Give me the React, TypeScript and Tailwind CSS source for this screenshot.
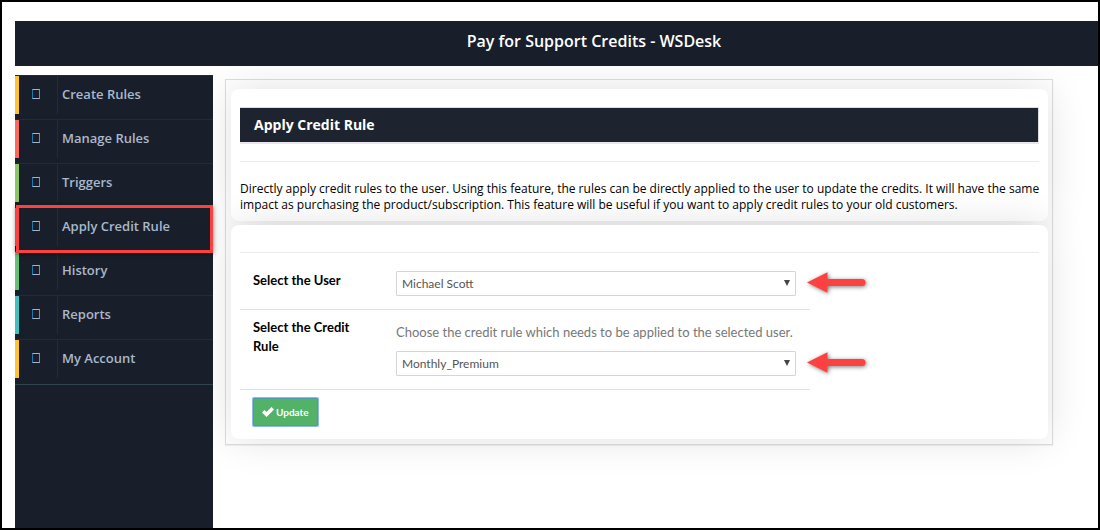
import { useState } from "react";
import type { ReactNode } from "react";
import clsx from "clsx";

interface MenuItem {
    label: string;
    bar: string;
}

const menuItems: MenuItem[] = [
    { label: "Create Rules", bar: "border-[#ffc233]" },
    { label: "Manage Rules", bar: "border-[#fa6a5d]" },
    { label: "Triggers", bar: "border-[#8cc665]" },
    { label: "Apply Credit Rule", bar: "border-[#fa6a5d]" },
    { label: "History", bar: "border-[#64c278]" },
    { label: "Reports", bar: "border-[#45c0c0]" },
    { label: "My Account", bar: "border-[#ffc233]" },
];

const ACTIVE = "Apply Credit Rule";

function Sidebar() {
    return (
        <nav className="relative z-10 w-[198px] shrink-0 bg-[#191f2a]">
            <ul className="border-b border-[#30444f] pb-px">
                {menuItems.map((item) => (
                    <li key={item.label} className="relative h-11 border-t border-[#242b36]">
                        <a href="#" className={clsx("flex h-[38px] items-center border-l-4", item.bar)}>
                            <span className="flex h-full w-[39px] items-center border-r border-[#242b36] pb-[2px] pl-[13px]">
                                <span className="h-[10px] w-2 border border-[#9db4cc] border-l-[#1c77ad] border-r-[#4d9bc8]" />
                            </span>
                            <span className="pl-1 text-[13px] font-semibold text-[#a9b8cc]">{item.label}</span>
                        </a>
                        {item.label === ACTIVE && (
                            <div className="pointer-events-none absolute -top-[3px] right-0 left-px z-10 h-12 border-3 border-[#fd4040] shadow-[0_1px_5px_rgba(0,0,0,0.5)]" />
                        )}
                    </li>
                ))}
            </ul>
        </nav>
    );
}

function PointerArrow() {
    return (
        <svg
            className="pointer-events-none absolute top-1/2 left-full ml-2 -translate-y-1/2 overflow-visible drop-shadow-[1px_1px_2px_rgba(0,0,0,0.5)]"
            width="64"
            height="26"
            viewBox="0 0 64 26"
            fill="#fd4040"
            aria-hidden="true"
        >
            <path d="M3 11.5 23.500 1.200V8H58a3.500 3.500 0 0 1 0 7H23.500V21.800Z" />
        </svg>
    );
}

interface SelectFieldProps {
    id: string;
    value: string;
    options: string[];
    onChange: (value: string) => void;
}

function SelectField({ id, value, options, onChange }: SelectFieldProps) {
    return (
        <div className="relative w-full max-w-[400px]">
            <select
                id={id}
                value={value}
                onChange={(e) => onChange(e.target.value)}
                className="block h-[25px] w-full appearance-none rounded-[1px] border border-[#d5d5d5] bg-white px-[5px] text-[12px] text-[#555]"
            >
                {options.map((option) => (
                    <option key={option}>{option}</option>
                ))}
            </select>
            <svg className="pointer-events-none absolute top-2 right-[5px]" width="8" height="8" viewBox="0 0 8 8" fill="#444" aria-hidden="true">
                <path d="M1 1h6L4 7Z" />
            </svg>
            <PointerArrow />
        </div>
    );
}

function FormRow({ id, label, children }: { id: string; label: string; children: ReactNode }) {
    return (
        <div className="flex border-b border-[#e2e2e2] pr-[14px] pl-[13px]">
            <label htmlFor={id} className="w-[143px] shrink-0 pr-8 text-[13px] leading-[19px] font-bold text-black">
                {label}
            </label>
            <div className="flex-1">{children}</div>
        </div>
    );
}

export default function App() {
    const [user, setUser] = useState("Michael Scott");
    const [rule, setRule] = useState("Monthly_Premium");

    return (
        <div className="flex min-h-screen flex-col border-2 border-black bg-white pt-[19px] pl-[13px] font-['Open_Sans',sans-serif]">
            <header className="relative z-10 flex h-[45px] items-center justify-center bg-[#191f2a] pb-[6px] pl-[75px]">
                <h1 className="text-[16px] font-semibold text-white">Pay for Support Credits - WSDesk</h1>
            </header>

            <div className="mt-[9px] flex flex-1">
                <Sidebar />

                <main className="mt-1 mr-[45px] ml-3 flex-1 self-start border border-[#dedede] pt-[9px] pr-1 pb-[5px] pl-[5px] shadow-[0_1px_1px_rgba(0,0,0,0.05)]">
                    <section className="rounded-lg bg-white px-[9px] pt-[18px] pb-2 shadow-[0_0_40px_rgba(0,0,0,0.12)]">
                        <h2 className="h-[35px] border-t border-r border-[#dcdce2] bg-[#1d2430] pl-[14px] text-[14px] leading-[34px] font-bold text-white shadow-[0_2px_0_#e8e6ec]">
                            Apply Credit Rule
                        </h2>
                        <hr className="mt-[19px] border-[#ebebeb]" />
                        <p className="-mr-2 mt-[19px] text-[12px] leading-4 text-black">
                            Directly apply credit rules to the user. Using this feature, the rules can be directly applied to the user to update the
                            credits. It will have the same impact as purchasing the product/subscription. This feature will be useful if you want to
                            apply credit rules to your old customers.
                        </p>
                    </section>

                    <section className="mt-1 rounded-lg bg-white px-[9px] pt-[27px] pb-[13px] shadow-[0_0_40px_rgba(0,0,0,0.12)]">
                        <hr className="border-[#ebebeb]" />
                        <form className="max-w-[570px] font-[Lato,sans-serif]" onSubmit={(e) => e.preventDefault()}>
                            <div className="[&_label]:pt-[18px]">
                                <FormRow id="user" label="Select the User">
                                    <div className="pt-[18px] pb-[13px]">
                                        <SelectField id="user" value={user} options={["Michael Scott"]} onChange={setUser} />
                                    </div>
                                </FormRow>
                            </div>
                            <div className="[&_label]:pt-2">
                                <FormRow id="rule" label="Select the Credit Rule">
                                    <div className="pt-3 pb-[13px]">
                                        <p className="mb-[9px] text-[13px] leading-5 whitespace-nowrap text-[#777]">
                                            Choose the credit rule which needs to be applied to the selected user.
                                        </p>
                                        <SelectField id="rule" value={rule} options={["Monthly_Premium"]} onChange={setRule} />
                                    </div>
                                </FormRow>
                            </div>
                            <button
                                type="submit"
                                className="mt-2 ml-[13px] flex h-[28px] items-center gap-[2px] rounded-[1px] border border-[#4b9cae] bg-[#52b368] px-2 text-[10px] font-bold text-white ring-1 ring-[#8fb8ef]"
                            >
                                <svg width="12" height="10" viewBox="0 0 12 10" fill="#fff" aria-hidden="true">
                                    <path d="M0 5.400 2.400 3 4.500 4.900 9.500 0 12 2.400 4.600 9.900Z" />
                                </svg>
                                Update
                            </button>
                        </form>
                    </section>
                </main>
            </div>
        </div>
    );
}
